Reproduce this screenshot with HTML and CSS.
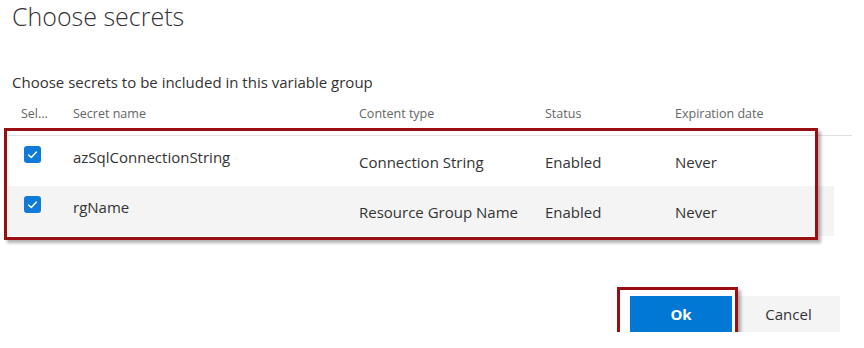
FILE: index.html
```html
<!DOCTYPE html>
<html lang="en">
<head>
    <title>Choose secrets</title>
    <meta charset="utf-8">
    <meta name="viewport" content="width=device-width, initial-scale=1">
    <link rel="stylesheet" href="styles.css">
</head>
<body>
    <div class="dialog">
        <h1 class="title">Choose secrets</h1>
        <p class="subtitle">Choose secrets to be included in this variable group</p>

        <div class="secrets-table">
            <div class="row head">
                <div class="cell select">Sel...</div>
                <div class="cell">Secret name</div>
                <div class="cell">Content type</div>
                <div class="cell">Status</div>
                <div class="cell">Expiration date</div>
            </div>
            <div class="row">
                <div class="cell select">
                    <span class="checkbox">
                        <svg viewBox="0 0 17 17" width="17" height="17"><path d="M4.6 8.9 L7.3 11.4 L12.4 6" fill="none" stroke="#fff" stroke-width="1.4" stroke-linecap="round" stroke-linejoin="round"/></svg>
                    </span>
                </div>
                <div class="cell name">azSqlConnectionString</div>
                <div class="cell">Connection String</div>
                <div class="cell">Enabled</div>
                <div class="cell">Never</div>
            </div>
            <div class="row alt">
                <div class="cell select">
                    <span class="checkbox">
                        <svg viewBox="0 0 17 17" width="17" height="17"><path d="M4.6 8.9 L7.3 11.4 L12.4 6" fill="none" stroke="#fff" stroke-width="1.4" stroke-linecap="round" stroke-linejoin="round"/></svg>
                    </span>
                </div>
                <div class="cell name">rgName</div>
                <div class="cell">Resource Group Name</div>
                <div class="cell">Enabled</div>
                <div class="cell">Never</div>
            </div>
            <!-- red callout drawn over the selected rows -->
            <div class="highlight table-highlight"></div>
        </div>

        <div class="actions">
            <div class="ok-wrap">
                <button type="button" class="btn primary">Ok</button>
                <span class="highlight ok-highlight"></span>
            </div>
            <button type="button" class="btn">Cancel</button>
        </div>
    </div>
</body>
</html>
```

FILE: styles.css
```css
body {
    font-family: 'Open Sans', 'Noto Sans', Arial, sans-serif;
    color: #333;
    background-color: #fff;
    margin: 0;
    padding: 0;
}

.dialog {
    padding: 0 12px;
}

.title {
    margin: 0;
    font-size: 25px;
    font-weight: 300;
    line-height: 32px;
    color: #333;
}

.subtitle {
    margin: 40px 0 0;
    font-size: 15px;
    line-height: 20px;
    color: #333;
}

.secrets-table {
    position: relative;
    width: 844px;
    margin-left: -4px;
}

.row {
    display: grid;
    grid-template-columns: 65px 286px 186px 130px 1fr;
    align-items: start;
    height: 50px;
    font-size: 15px;
    line-height: 20px;
}

.row .cell {
    padding-top: 16px;
    white-space: nowrap;
}

.row .cell.select {
    padding-top: 10px;
    padding-left: 16px;
}

.row .cell.name {
    padding-top: 11px;
}

.row.head {
    height: 44px;
    box-sizing: border-box;
    border-bottom: 1px solid #e1e1e1;
    font-size: 12.5px;
    line-height: 16px;
    color: #666;
}

.row.head .cell {
    padding-top: 14px;
}

.row.head .cell.select {
    padding-left: 13px;
}

.row.alt {
    background-color: #f4f4f4;
    margin-right: 18px;
}

.checkbox {
    display: block;
    width: 17px;
    height: 17px;
    border-radius: 3px;
    background-color: #0f7ad8;
}

.checkbox svg {
    display: block;
}

.highlight {
    position: absolute;
    box-sizing: border-box;
    border: 3px solid #9a0e12;
    box-shadow: 3px 3px 3px rgba(0,0,0,0.3);
    pointer-events: none;
}

.table-highlight {
    left: -4px;
    top: 36px;
    width: 814px;
    height: 112px;
}

.actions {
    display: flex;
    justify-content: flex-end;
    gap: 5px;
    margin-top: 60px;
    padding-right: 12px;
}

.ok-wrap {
    position: relative;
    display: flex;
}

.btn {
    width: 103px;
    height: 36px;
    border: none;
    background-color: #f4f4f4;
    color: #333;
    font-family: inherit;
    font-size: 15px;
    cursor: pointer;
}

.btn.primary {
    width: 102px;
    background-color: #0078d4;
    color: #fff;
    font-weight: bold;
}

.ok-highlight {
    left: -13px;
    top: -9px;
    width: 121px;
    height: 54px;
}
```
